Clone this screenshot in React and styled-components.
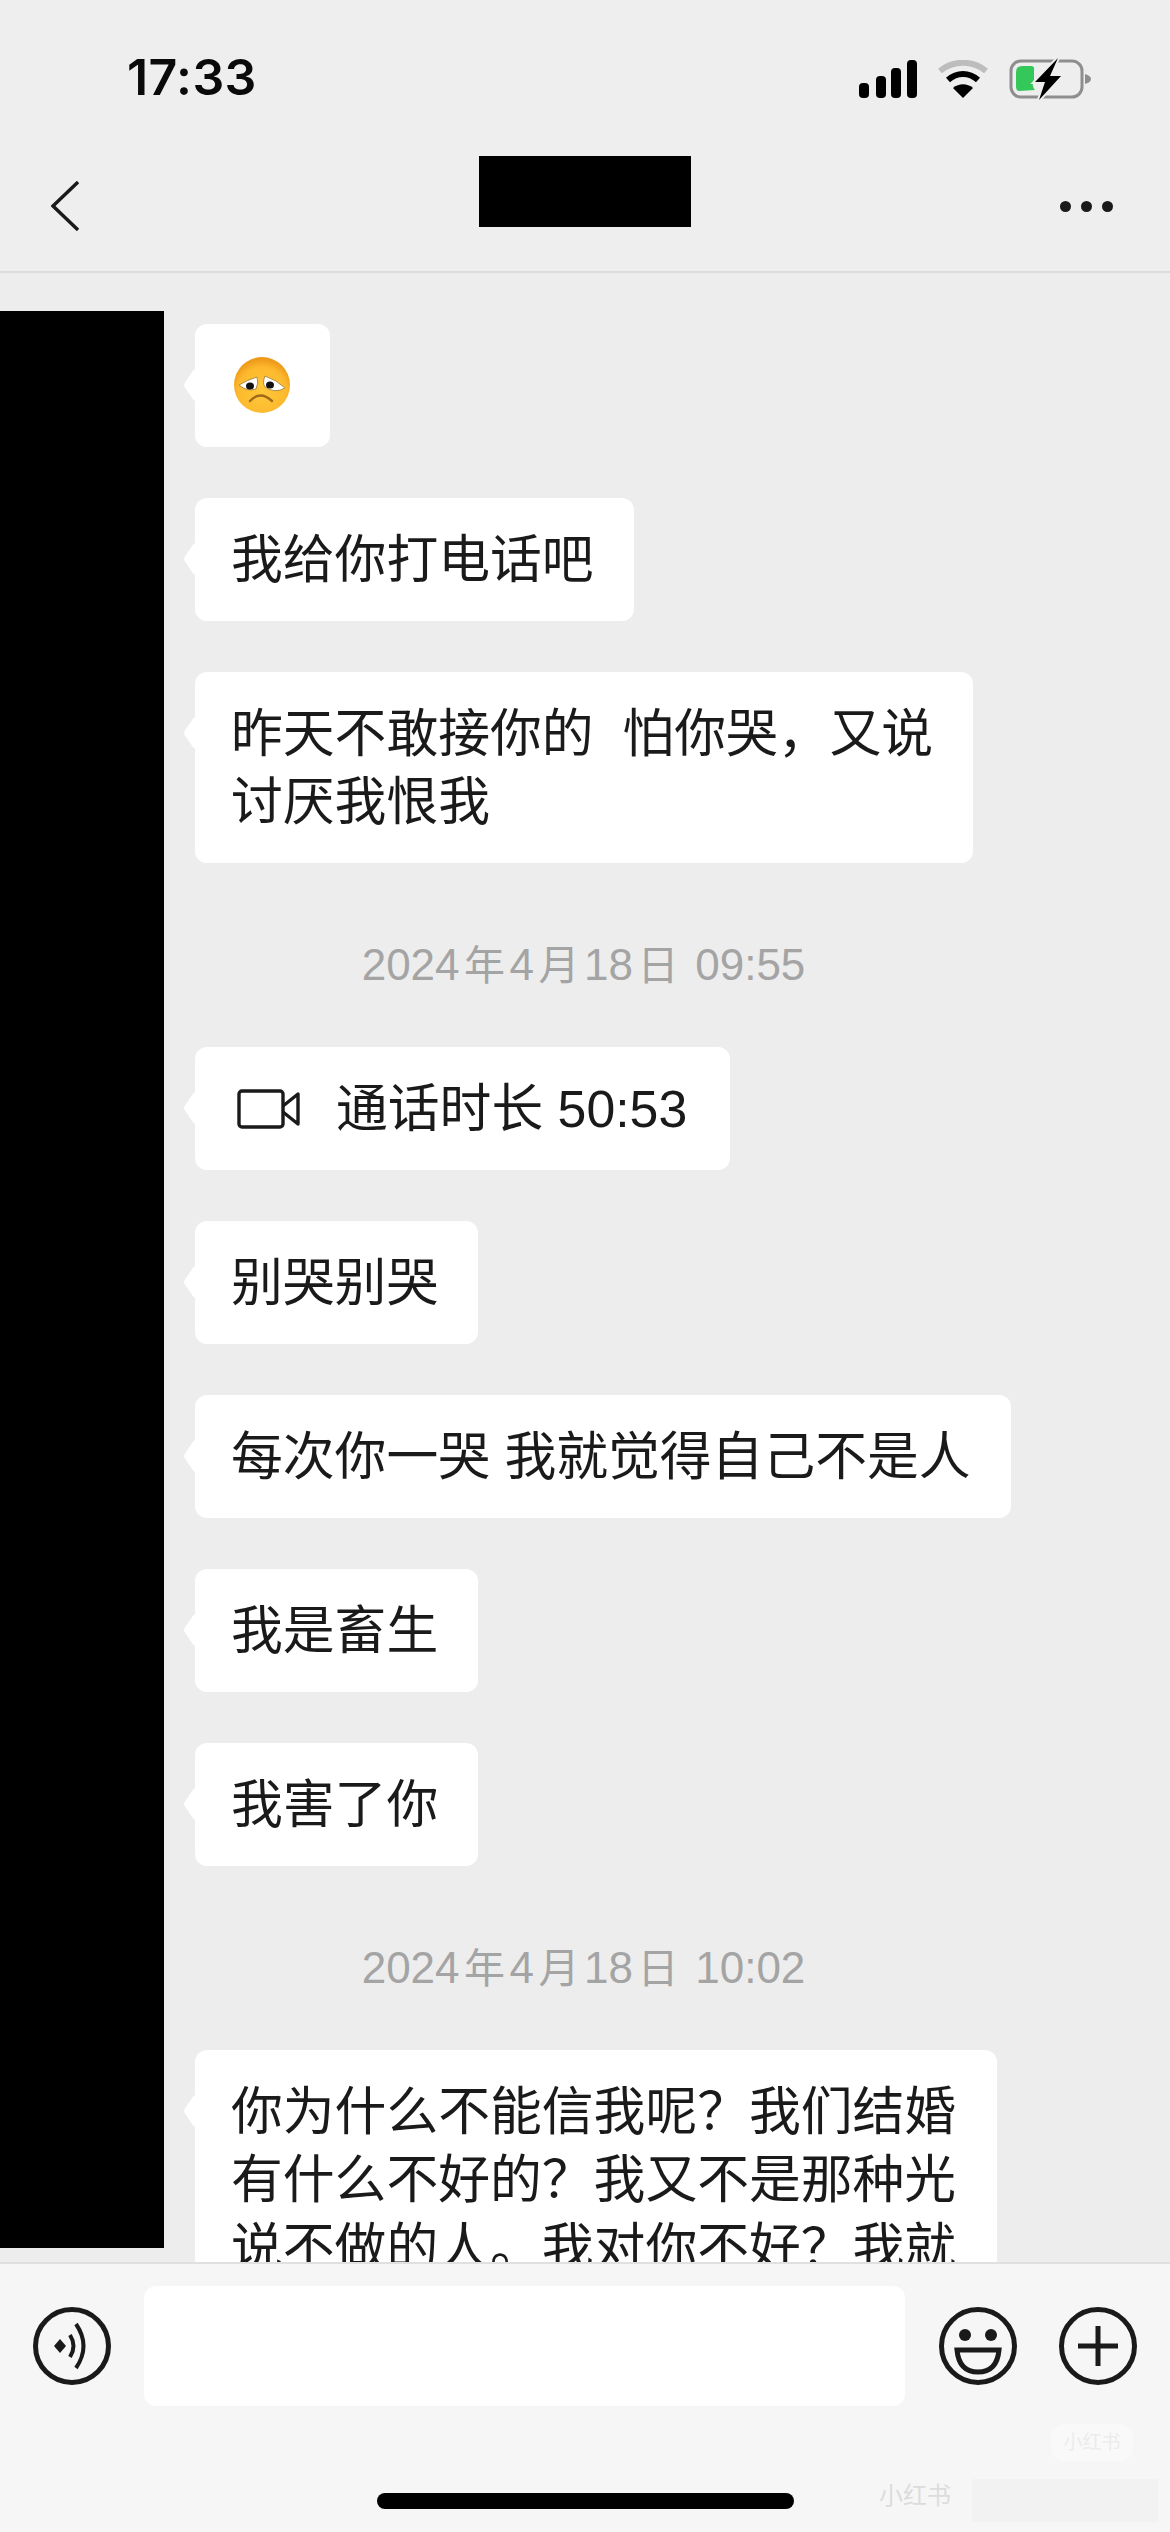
import React from "react";
import styled, { createGlobalStyle } from "styled-components";

const GlobalStyle = createGlobalStyle`
  html, body {
    margin: 0;
    padding: 0;
    background: #ededed;
  }
  * {
    box-sizing: border-box;
  }
`;

const Page = styled.div`
  width: 1170px;
  height: 2532px;
  display: flex;
  flex-direction: column;
  overflow: hidden;
  background: #ededed;
  color: #1a1a1a;
  font-family: "Liberation Sans", "Noto Sans CJK SC", sans-serif;
`;

const Header = styled.header`
  height: 273px;
  flex: none;
  background: #eeeeee;
  border-bottom: 2px solid #dcdcdc;
`;

const StatusBar = styled.div`
  height: 120px;
  padding: 52px 79px 0 127px;
  display: flex;
  justify-content: space-between;
  align-items: flex-start;
`;

const Clock = styled.div`
  font-family: Inter, sans-serif;
  font-size: 50px;
  font-weight: 600;
  line-height: 50px;
  letter-spacing: 0.4px;
  color: #0a0a0a;
`;

const IconGroup = styled.div`
  display: flex;
  align-items: center;
  gap: 21px;
  margin-top: 6px;
`;

const NavBar = styled.nav`
  height: 151px;
  padding: 0 57px 0 51px;
  display: grid;
  grid-template-columns: 1fr 212px 1fr;
  align-items: start;
`;

const BackButton = styled.div`
  margin-top: 61px;
  display: flex;
`;

const TitleMask = styled.div`
  margin: 36px -3px 0 3px;
  height: 71px;
  background: #000;
`;

const MoreButton = styled.div`
  margin-top: 81px;
  justify-self: end;
  display: flex;
  gap: 10px;
`;

const MoreDot = styled.span`
  width: 11px;
  height: 11px;
  border-radius: 50%;
  background: #1a1a1a;
`;

const Chat = styled.main`
  position: relative;
  flex: 1;
  min-height: 0;
  overflow: hidden;
  padding: 51px 100px 0 195px;
  display: flex;
  flex-direction: column;
  align-items: flex-start;
`;

const AvatarMask = styled.div`
  position: absolute;
  top: 38px;
  left: 0;
  width: 164px;
  height: 1937px;
  background: #000;
`;

const Bubble = styled.div`
  position: relative;
  flex: none;
  max-width: ${(p) => p.$maxWidth || "none"};
  min-height: 123px;
  margin-bottom: 51px;
  padding: 27.5px 40px 27.5px 36px;
  border-radius: 12px;
  background: #fff;
  font-size: 51.8px;
  line-height: 68px;
  white-space: pre-wrap;

  &::before {
    content: "";
    position: absolute;
    top: 49px;
    left: -12px;
    width: 24px;
    height: 24px;
    border-radius: 4px;
    background: #fff;
    transform: scaleX(0.7) rotate(45deg);
  }
`;

const EmojiBubble = styled(Bubble)`
  width: 135px;
  padding: 32px 0 0 38px;
  line-height: 0;
`;

const CallRow = styled.div`
  display: flex;
  align-items: center;
  gap: 35px;
  padding: 0 3px 0 6px;
`;

const TimeLabel = styled.div`
  flex: none;
  width: 1170px;
  height: 64px;
  margin: 19px 0 50px -195px;
  padding-right: 3px;
  font-size: 44px;
  line-height: 64px;
  color: #a4a4a4;
  text-align: center;
  white-space: pre;
`;

const DateChar = styled.span`
  margin: 0 4.5px;
  font-size: 41px;
`;

const Toolbar = styled.footer`
  position: relative;
  flex: none;
  height: 270px;
  padding-top: 22px;
  background: #f6f6f6;
  border-top: 2px solid #e0e0e0;
  display: flex;
  flex-direction: column;
  align-items: center;
`;

const InputRow = styled.div`
  width: 100%;
  padding: 0 32px 0 33px;
  display: flex;
  align-items: flex-start;
`;

const RoundIcon = styled.svg`
  flex: none;
  width: 80px;
  height: 80px;
  margin: ${(p) => p.$margin || "20px 0 0 0"};
`;

const MessageInput = styled.div`
  width: 762px;
  height: 120px;
  margin: 0 33px 0 31px;
  border-radius: 12px;
  background: #fff;
`;

const HomeBar = styled.div`
  width: 417px;
  height: 16px;
  margin-top: 87px;
  border-radius: 8px;
  background: #000;
`;

const WatermarkLogo = styled.div`
  position: absolute;
  top: 160px;
  left: 1051px;
  width: 82px;
  height: 38px;
  border-radius: 14px;
  background: #f9f9f9;
  color: #ececec;
  font-size: 19px;
  line-height: 38px;
  text-align: center;
`;

const WatermarkText = styled.div`
  position: absolute;
  top: 217px;
  left: 879px;
  font-size: 24px;
  line-height: 30px;
  color: #dcdcdc;
`;

const WatermarkSmudge = styled.div`
  position: absolute;
  top: 215px;
  left: 972px;
  width: 186px;
  height: 43px;
  background: #f2f2f2;
`;

function SignalIcon() {
  return (
    <svg width="58" height="38" viewBox="0 0 58 38">
      <rect x="0" y="23" width="10" height="15" rx="4" fill="#000" />
      <rect x="17" y="16" width="10" height="22" rx="4" fill="#000" />
      <rect x="32" y="8" width="10" height="30" rx="4" fill="#000" />
      <rect x="48" y="0" width="10" height="38" rx="4" fill="#000" />
    </svg>
  );
}

function WifiIcon() {
  return (
    <svg width="50" height="38" viewBox="0 0 50 38">
      <path d="M2 11 C15 0 35 0 48 11" fill="none" stroke="#bdbdbd" strokeWidth="6" />
      <path d="M10 20 C19 12 31 12 40 20" fill="none" stroke="#000" strokeWidth="6" />
      <path d="M25 38 L15 28 C21 23 29 23 35 28 Z" fill="#000" />
    </svg>
  );
}

function BatteryIcon() {
  return (
    <svg width="82" height="42" viewBox="0 0 82 42">
      <rect x="2" y="3" width="71" height="36" rx="10" fill="none" stroke="#8e8e8e" strokeWidth="3" />
      <path d="M76 16 C80 17 82 19 82 21 C82 23 80 25 76 26 Z" fill="#8e8e8e" />
      <path d="M7 14 Q7 8 13 8 L22 8 Q26 8 25 13 L25 22 Q22 27 26 32 L10 33 Q7 33 7 28 Z" fill="#34c759" />
      <path d="M49 0 L26 24 L36 24 L30 42 L52 18 L41 18 Z" fill="#eeeeee" stroke="#eeeeee" strokeWidth="4" />
      <path d="M49 0 L26 24 L36 24 L30 42 L52 18 L41 18 Z" fill="#000" />
    </svg>
  );
}

function SadFace() {
  return (
    <svg width="58" height="58" viewBox="0 0 58 58">
      <defs>
        <radialGradient id="faceFill" cx="50%" cy="62%" r="58%">
          <stop offset="0%" stopColor="#ffc83a" />
          <stop offset="75%" stopColor="#fdb92e" />
          <stop offset="100%" stopColor="#ee9a1a" />
        </radialGradient>
      </defs>
      <circle cx="29" cy="29" r="28" fill="url(#faceFill)" />
      <path d="M6 29 Q14 24 24 21 Q26 27 23 33 Q14 36 6 29 Z" fill="#fff" stroke="#a9803a" strokeWidth="0.9" />
      <path d="M52 32 Q44 24 32 20 Q29 27 32 31 Q42 38 52 32 Z" fill="#fff" stroke="#a9803a" strokeWidth="0.9" />
      <ellipse cx="17" cy="30" rx="4" ry="3.6" fill="#111" />
      <ellipse cx="37" cy="29" rx="4" ry="3.6" fill="#111" />
      <path d="M17 45 Q27 34 39 45" fill="none" stroke="#a06a1c" strokeWidth="2.4" strokeLinecap="round" />
    </svg>
  );
}

function VideoIcon() {
  return (
    <svg width="64" height="40" viewBox="0 0 64 40" fill="none" stroke="#1a1a1a" strokeWidth="3.4" strokeLinejoin="round">
      <rect x="2" y="2" width="44" height="36" rx="3" />
      <path d="M46 17 L61 5 L61 35 L46 23" />
    </svg>
  );
}

function DateStamp({ time }) {
  return (
    <TimeLabel>
      2024<DateChar>年</DateChar>4<DateChar>月</DateChar>18<DateChar>日</DateChar> {time}
    </TimeLabel>
  );
}

export default function App() {
  return (
    <Page>
      <GlobalStyle />
      <Header>
        <StatusBar>
          <Clock>17:33</Clock>
          <IconGroup>
            <SignalIcon />
            <WifiIcon />
            <BatteryIcon />
          </IconGroup>
        </StatusBar>
        <NavBar>
          <BackButton>
            <svg width="28" height="50" viewBox="0 0 28 50" fill="none" stroke="#1a1a1a" strokeWidth="3.4">
              <path d="M27 1 L2 25 L27 49" />
            </svg>
          </BackButton>
          <TitleMask />
          <MoreButton>
            <MoreDot />
            <MoreDot />
            <MoreDot />
          </MoreButton>
        </NavBar>
      </Header>

      <Chat>
        <AvatarMask />
        <EmojiBubble>
          <SadFace />
        </EmojiBubble>
        <Bubble>我给你打电话吧</Bubble>
        <Bubble>{"昨天不敢接你的  怕你哭，又说\n讨厌我恨我"}</Bubble>
        <DateStamp time="09:55" />
        <Bubble>
          <CallRow>
            <VideoIcon />
            <span>通话时长 50:53</span>
          </CallRow>
        </Bubble>
        <Bubble>别哭别哭</Bubble>
        <Bubble>每次你一哭 我就觉得自己不是人</Bubble>
        <Bubble>我是畜生</Bubble>
        <Bubble>我害了你</Bubble>
        <DateStamp time="10:02" />
        <Bubble $maxWidth="802px">你为什么不能信我呢？我们结婚有什么不好的？我又不是那种光说不做的人。我对你不好？我就</Bubble>
      </Chat>

      <Toolbar>
        <InputRow>
          <RoundIcon viewBox="0 0 80 80" fill="none" stroke="#1a1a1a" strokeWidth="5">
            <circle cx="39" cy="40" r="36.5" />
            <path d="M21 40 L27 33 L33 40 L27 47 Z" fill="#1a1a1a" stroke="none" />
            <path d="M37 29 Q44 40 37 51" strokeWidth="4" />
            <path d="M43 18 Q58 40 43 62" strokeWidth="4" />
          </RoundIcon>
          <MessageInput />
          <RoundIcon viewBox="0 0 80 80" fill="none" stroke="#1a1a1a" strokeWidth="5">
            <circle cx="40" cy="40" r="36.5" />
            <circle cx="27" cy="29" r="6" fill="#1a1a1a" stroke="none" />
            <circle cx="53" cy="29" r="6" fill="#1a1a1a" stroke="none" />
            <path d="M19 44 L61 44 Q59 66 40 66 Q21 66 19 44 Z" />
          </RoundIcon>
          <RoundIcon $margin="20px 0 0 40px" viewBox="0 0 80 80" fill="none" stroke="#1a1a1a" strokeWidth="5">
            <circle cx="40" cy="40" r="36.5" />
            <path d="M20 40 L60 40 M40 20 L40 60" />
          </RoundIcon>
        </InputRow>
        <HomeBar />
        <WatermarkLogo>小红书</WatermarkLogo>
        <WatermarkSmudge />
        <WatermarkText>小红书</WatermarkText>
      </Toolbar>
    </Page>
  );
}
